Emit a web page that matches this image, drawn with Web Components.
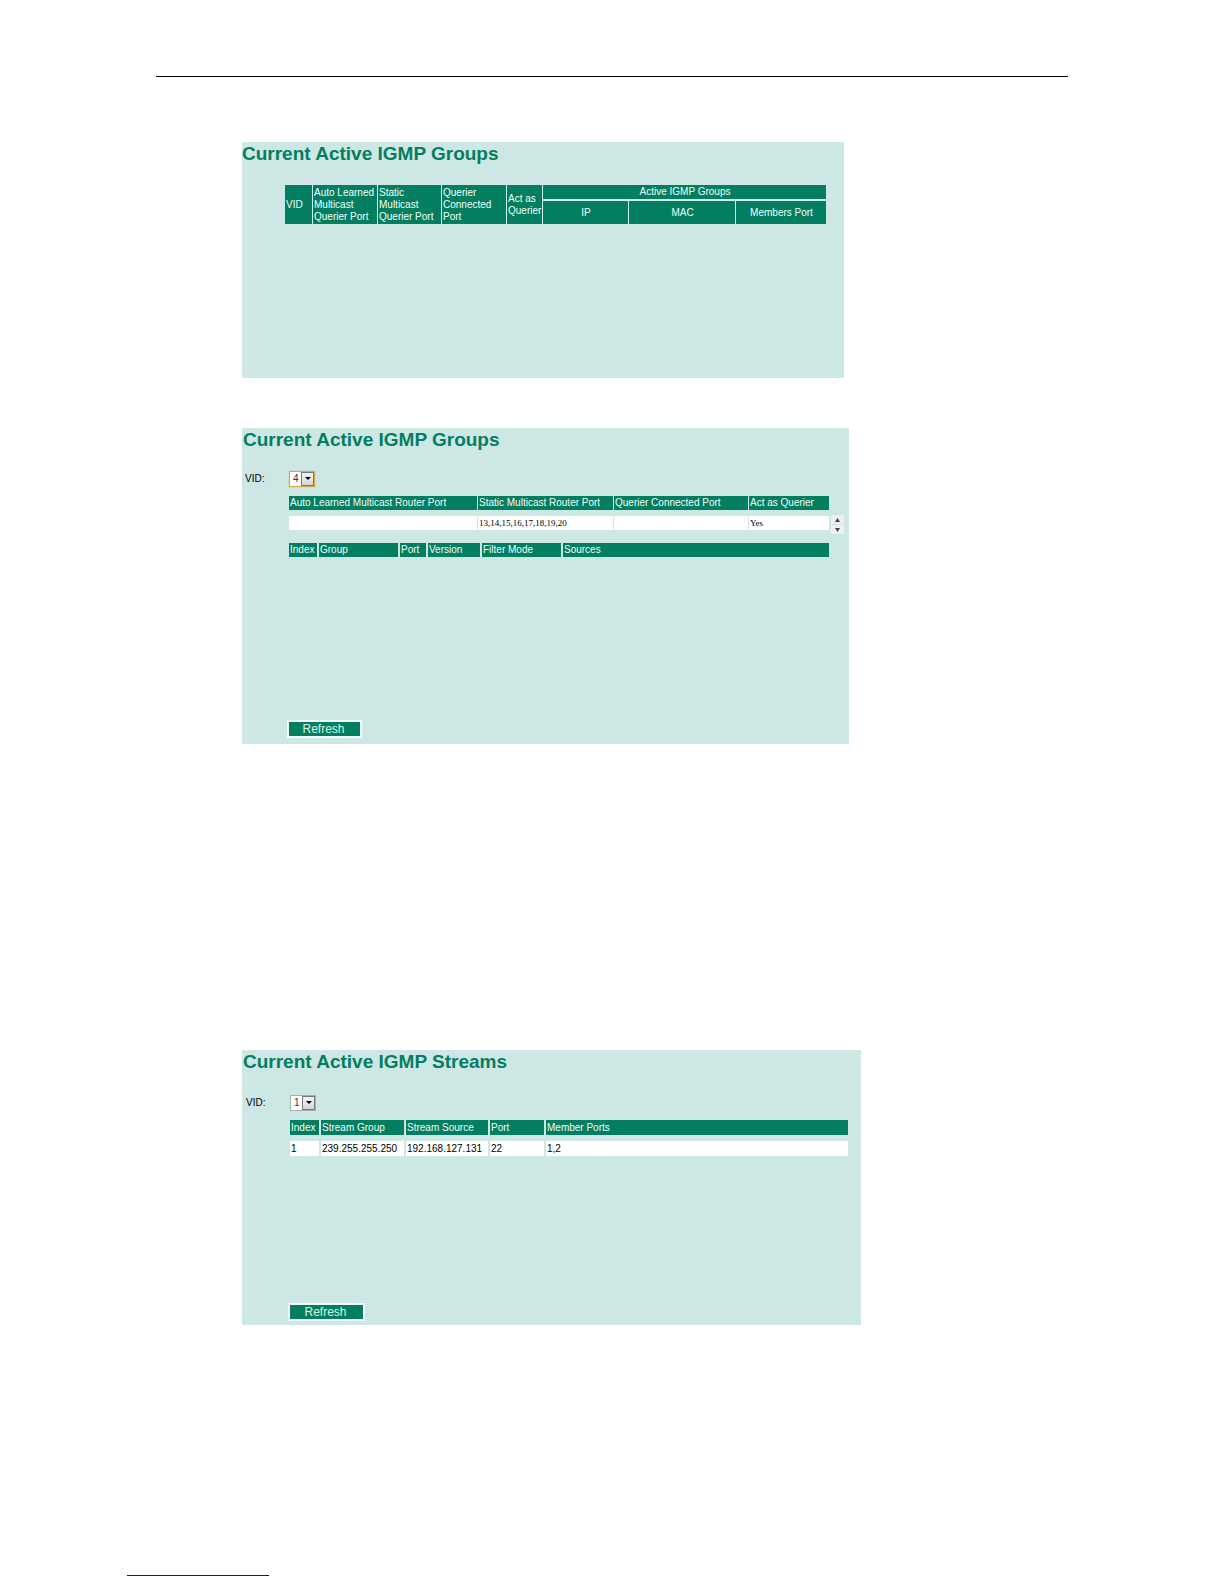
<!DOCTYPE html>
<html lang="en">
<head>
<meta charset="utf-8">
<meta name="viewport" content="width=device-width, initial-scale=1">
<title>IGMP Snooping</title>
<style>
body { margin: 0; background: #fff; color: #000; font-family: "Liberation Sans", Arial, sans-serif; }
</style>
</head>
<body>
<manual-page>
  <igmp-panel heading="Current Active IGMP Groups" class="legacy">
    <groups-table></groups-table>
  </igmp-panel>
  <igmp-panel heading="Current Active IGMP Groups" class="groups">
    <vid-picker value="4" active></vid-picker>
    <querier-row>
      <data-table widths="189,136,135,*" gap="1" serif
        head="Auto Learned Multicast Router Port|Static Multicast Router Port|Querier Connected Port|Act as Querier"
        row="|13,14,15,16,17,18,19,20||Yes"></data-table>
      <row-scroller></row-scroller>
    </querier-row>
    <data-table class="members" widths="30,81,28,54,81,*" gap="2" head="Index|Group|Port|Version|Filter Mode|Sources"></data-table>
    <refresh-button slot="action"></refresh-button>
  </igmp-panel>
  <igmp-panel heading="Current Active IGMP Streams" class="streams">
    <vid-picker value="1"></vid-picker>
    <data-table widths="31,85,84,56,*" gap="2"
      head="Index|Stream Group|Stream Source|Port|Member Ports"
      row="1|239.255.255.250|192.168.127.131|22|1,2"></data-table>
    <refresh-button slot="action"></refresh-button>
  </igmp-panel>
</manual-page>

<script>
function define(name, render) {
  customElements.define(name, class extends HTMLElement {
    connectedCallback() {
      if (!this.shadowRoot) this.attachShadow({ mode: "open" }).innerHTML = render(this);
    }
  });
}

define("manual-page", () => `
<style>
:host { display: block; }
header { margin: 0 156px; padding-top: 76px; border-bottom: 1px solid #000; }
main { padding: 65px 156px 0 242px; }
::slotted(.legacy) { --h: 236px; --left: 43px; --right: 18px; --title-x: 0px; max-width: 602px; }
::slotted(.groups) { --h: 316px; --left: 47px; --right: 5px; --title-gap: 18px; max-width: 607px; margin-top: 50px; }
::slotted(.streams) { --h: 275px; --left: 48px; --right: 13px; --bottom: 4px; --title-gap: 20px; --cell: 15px; --button-w: 77px; max-width: 619px; margin-top: 306px; }
footer { margin: 250px 0 8px 127px; max-width: 142px; border-bottom: 1px solid #14148c; }
</style>
<header></header>
<main><slot></slot></main>
<footer></footer>`);

define("igmp-panel", el => `
<style>
:host { display: flex; flex-direction: column; box-sizing: border-box; min-height: var(--h); padding: 0 var(--right) var(--bottom, 6px) var(--left); background: #cde7e5; }
h1 { margin: 0 0 var(--title-gap, 19px) calc(var(--title-x, 1px) - var(--left)); font-size: 19px; line-height: 24px; font-weight: bold; color: #047e60; white-space: nowrap; }
.body { display: flex; flex-direction: column; gap: 9px; }
.action { margin-top: auto; margin-left: -2px; }
::slotted(.members) { margin-right: 15px; }
</style>
<h1>${el.getAttribute("heading")}</h1>
<div class="body"><slot></slot></div>
<div class="action"><slot name="action"></slot></div>`);

define("groups-table", () => `
<style>
:host { display: block; }
table { width: 100%; table-layout: fixed; border-spacing: 0; color: #f0fffa; }
th { padding: 0 0 0 1px; border-right: 1px solid #cdf5ea; background: #047e60; font-size: 10px; line-height: 12px; font-weight: normal; text-align: left; white-space: nowrap; }
tr:first-child th { height: 14px; }
tr + tr th { height: 23px; text-align: center; }
th[colspan] { text-align: center; border-right: 0; border-bottom: 2px solid #cdf5ea; }
tr + tr th:last-child { border-right: 0; }
</style>
<table>
<colgroup><col style="width:28px"><col style="width:65px"><col style="width:64px"><col style="width:65px"><col style="width:36px"><col style="width:86px"><col style="width:107px"><col></colgroup>
<thead>
<tr><th rowspan="2">VID</th><th rowspan="2">Auto Learned<br>Multicast<br>Querier Port</th><th rowspan="2">Static<br>Multicast<br>Querier Port</th><th rowspan="2">Querier<br>Connected<br>Port</th><th rowspan="2">Act as<br>Querier</th><th colspan="3">Active IGMP Groups</th></tr>
<tr><th>IP</th><th>MAC</th><th>Members Port</th></tr>
</thead>
</table>`);

define("data-table", el => {
  const cells = (name, tag) => el.getAttribute(name).split("|").map(t => `<${tag}>${t}</${tag}>`).join("");
  const cols = el.getAttribute("widths").split(",").map(w => w === "*" ? "<col>" : `<col style="width:${w}px">`).join("");
  return `
<style>
:host { display: block; --sep: ${el.getAttribute("gap")}px; }
table { width: 100%; table-layout: fixed; border-spacing: 0; }
th, td { box-sizing: content-box; height: var(--cell, 14px); padding: 0 0 0 1px; border-right: var(--sep) solid #cde7e5; font-size: 10px; line-height: 14px; font-weight: normal; text-align: left; white-space: nowrap; }
th { background: #047e60; color: #f0fffa; }
td { background: #fff; border-top: 6px solid #cde7e5; }
th:last-child, td:last-child { border-right: 0; }
:host([serif]) td { font-family: "Liberation Serif", "Times New Roman", serif; font-size: 9px; }
</style>
<table><colgroup>${cols}</colgroup>
<thead><tr>${cells("head", "th")}</tr></thead>
${el.hasAttribute("row") ? `<tbody><tr>${cells("row", "td")}</tr></tbody>` : ""}
</table>`;
});

define("querier-row", () => `
<style>
:host { display: grid; grid-template-columns: 1fr 13px; column-gap: 2px; min-height: 38px; }
::slotted(row-scroller) { align-self: end; }
</style><slot></slot>`);

define("row-scroller", () => `
<style>
:host { display: grid; gap: 1px; }
button { display: grid; place-items: center; height: 9px; margin: 0; padding: 0; border: 0; background: #eef0f0; }
svg { display: block; fill: #444; }
</style>
<button type="button" aria-label="Scroll up"><svg width="5" height="4" viewBox="0 0 5 4"><path d="M2.5 0 5 4H0z"/></svg></button>
<button type="button" aria-label="Scroll down"><svg width="5" height="4" viewBox="0 0 5 4"><path d="M0 0h5L2.5 4z"/></svg></button>`);

define("vid-picker", el => `
<style>
:host { display: flex; align-items: center; height: 17px; margin-left: -44px; }
label { flex: 0 0 44px; font-size: 10px; line-height: 14px; }
.box { display: grid; grid-template-columns: 12px 14px; }
select { grid-area: 1 / 1 / 2 / 3; appearance: none; box-sizing: border-box; width: 26px; height: 16px; margin: 0; padding: 0 0 0 3px; border: 1px solid #a5b0b0; border-radius: 0; outline: 0; background: #fff; color: #333; font: 10px/14px "Liberation Sans", Arial, sans-serif; }
:host([active]) select { border-color: #d9a648; box-shadow: 0 0 1px #d9a648; }
.arrow { grid-area: 1 / 2; z-index: 1; display: grid; place-items: center; box-sizing: border-box; height: 14px; margin: 1px 1px 1px 0; border: 1px solid #77777f; background: linear-gradient(#f6f6f6, #d4d4d6); pointer-events: none; }
</style>
<label for="vid">VID:</label>
<span class="box"><select id="vid"><option>${el.getAttribute("value")}</option></select>
<span class="arrow"><svg width="6" height="3" viewBox="0 0 6 3"><path d="M0 0h6L3 3z"/></svg></span></span>`);

define("refresh-button", () => `
<style>
:host { display: block; }
button { display: block; box-sizing: border-box; width: var(--button-w, 75px); height: 18px; margin: 0; padding: 0 2px 0 0; border: 2px solid #f4fcfb; border-radius: 0; background: #047e60; color: #d5f7ec; font: 12px/14px "Liberation Sans", Arial, sans-serif; }
</style>
<button type="button">Refresh</button>`);
</script>
</body>
</html>
